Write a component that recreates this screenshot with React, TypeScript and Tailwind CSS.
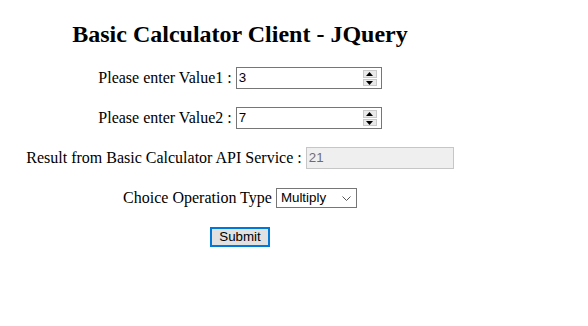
import React from "react";

function Spinner() {
  return (
    <div className="ml-auto mr-[4px] flex h-[16px] w-[14px] flex-col gap-[1px]">
      <div className="flex h-[8px] w-[14px] items-center justify-center border border-[#c9c9c9] bg-[#e9e9e9]">
        <svg width="7" height="4" viewBox="0 0 7 4">
          <path d="M3.5 0 L7 4 L0 4 Z" fill="#000" />
        </svg>
      </div>
      <div className="flex h-[7px] w-[14px] items-center justify-center border border-[#c9c9c9] bg-[#e9e9e9]">
        <svg width="7" height="4" viewBox="0 0 7 4">
          <path d="M0 0 L7 0 L3.5 4 Z" fill="#000" />
        </svg>
      </div>
    </div>
  );
}

function NumberBox({ value }: { value: string }) {
  return (
    <div className="flex h-[22px] w-[146px] items-center border border-[#767676] bg-white pl-[2px] font-['Liberation_Sans',Arial,sans-serif] text-[13.33px] text-black">
      <span>{value}</span>
      <Spinner />
    </div>
  );
}

export default function App() {
  return (
    <div className="flex w-[480px] flex-col items-center bg-white font-['Liberation_Serif','Times_New_Roman',serif] text-[16px] text-black">
      <h2 className="mt-[20px] text-[24px] font-bold leading-[28px]">Basic Calculator Client - JQuery</h2>

      <div className="mt-[19px] flex h-[22px] items-center gap-[4px]">
        <span>Please enter Value1 :</span>
        <NumberBox value="3" />
      </div>

      <div className="mt-[18px] flex h-[22px] items-center gap-[4px]">
        <span>Please enter Value2 :</span>
        <NumberBox value="7" />
      </div>

      <div className="mt-[18px] flex h-[22px] items-center gap-[4px]">
        <span>Result from Basic Calculator API Service :</span>
        <div className="flex h-[22px] w-[148px] items-center border border-[#c6c6c6] bg-[#efefef] pl-[2px] font-['Liberation_Sans',Arial,sans-serif] text-[13.33px] text-[#6d6d6d]">
          21
        </div>
      </div>

      <div className="mt-[19px] flex h-[20px] items-center gap-[4px]">
        <span>Choice Operation Type</span>
        <div className="flex h-[20px] w-[81px] items-center border border-[#767676] bg-white pl-[4px] pr-[5px] font-['Liberation_Sans',Arial,sans-serif] text-[13.33px] text-black">
          <span>Multiply</span>
          <svg className="ml-auto" width="9" height="5" viewBox="0 0 9 5">
            <path d="M0.5 0.5 L4.5 4.5 L8.5 0.5" fill="none" stroke="#555" strokeWidth="1" />
          </svg>
        </div>
      </div>

      <div className="mt-[19px] flex h-[20px] w-[60px] items-center justify-center border-2 border-[#0078d7] bg-[#e1e1e1] font-['Liberation_Sans',Arial,sans-serif] text-[13.33px] text-black">
        Submit
      </div>
    </div>
  );
}
